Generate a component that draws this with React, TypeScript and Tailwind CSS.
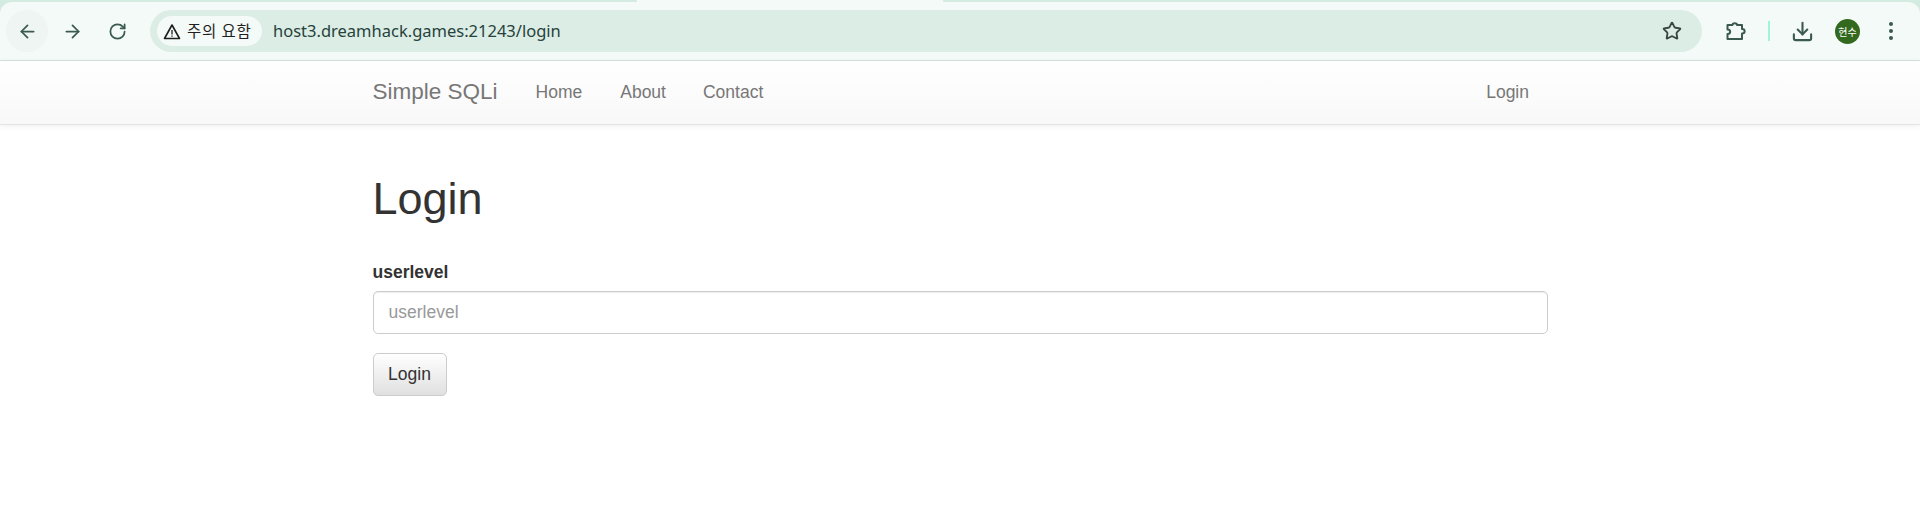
import { ArrowLeft, ArrowRight, RotateCw, Star, Download } from "lucide-react";

function ToolbarButton({ children, className }: { children: React.ReactNode; className?: string }) {
  return <div className={"flex h-[42px] w-[42px] items-center justify-center " + (className ?? "")}>{children}</div>;
}

function BrowserBar() {
  return (
    <div className="h-[61px] bg-[#d3ebe1]">
      {/* tab strip, the active tab runs into the toolbar */}
      <div className="flex h-[2px]">
        <div className="w-[637px]" />
        <div className="w-[306px] bg-[#f4faf7]" />
      </div>
      <div className="flex h-[59px] items-start rounded-t-[12px] border-b border-[#d5e3de] bg-[#f4faf7] pt-[8px] text-[#3a5a50]">
        <div className="flex w-[150px] items-center gap-[3px] pl-[6px]">
          <ToolbarButton className="rounded-full bg-[#eef5f2]">
            <ArrowLeft size={21} strokeWidth={2} />
          </ToolbarButton>
          <ToolbarButton>
            <ArrowRight size={21} strokeWidth={2} />
          </ToolbarButton>
          <ToolbarButton>
            <RotateCw size={19} strokeWidth={2.2} />
          </ToolbarButton>
        </div>
        <div className="flex h-[42px] w-[1552px] items-center rounded-full bg-[#dcede6] pl-[7px] pr-[20px]">
          <div className="flex h-[30px] w-[105px] shrink-0 items-center gap-[6px] whitespace-nowrap rounded-full bg-[#f4faf7] pl-[6px] font-['Noto_Sans_CJK_KR',sans-serif] text-[15.5px] tracking-[0.8px] text-[#1f1f1f]">
            <svg width="18" height="17" viewBox="0 0 18 17" fill="none" stroke="#1f1f1f" strokeWidth="1.6" className="shrink-0">
              <path d="M9 2 16.5 15.5H1.5Z" strokeLinejoin="round" />
              <path d="M9 7v4.5M9 12.5v1.2" strokeWidth="1.3" />
            </svg>
            <span>주의 요함</span>
          </div>
          <span className="ml-[11px] font-['Noto_Sans',sans-serif] text-[16.5px] text-[#26423a]">host3.dreamhack.games:21243/login</span>
          <Star size={20} strokeWidth={2.2} className="ml-auto text-[#38463f]" />
        </div>
        <div className="flex h-[42px] flex-1 items-center">
          <svg width="22" height="22" viewBox="0 0 22 22" fill="none" stroke="#3a5a50" strokeWidth="2" className="ml-[23px]" strokeLinejoin="round">
            <path d="M2.5 5H7.5C7.5 2.5 12 2.5 12 5H17V9C20.5 9 20.5 13.5 17 13.5V19H2.5V14C6 14 6 9.5 2.5 9.5Z" />
          </svg>
          <div className="ml-[21px] h-[20px] w-[2px] bg-[#9ff5dc]" />
          <Download size={23} strokeWidth={2.2} className="ml-[21px]" />
          <div className="ml-[21px] flex h-[25px] w-[25px] items-center justify-center rounded-full bg-[#33691e] font-['Noto_Sans_CJK_KR',sans-serif] text-[10px] text-white">현수</div>
          <div className="ml-[29px] flex flex-col gap-[3px]">
            <span className="h-[4px] w-[4px] rounded-full bg-[#3a5a50]" />
            <span className="h-[4px] w-[4px] rounded-full bg-[#3a5a50]" />
            <span className="h-[4px] w-[4px] rounded-full bg-[#3a5a50]" />
          </div>
        </div>
      </div>
    </div>
  );
}

function Navbar() {
  return (
    <nav className="h-[64px] border-b border-[#e4e4e4] bg-gradient-to-b from-white to-[#f8f8f8] shadow-[0_1px_6px_rgba(0,0,0,0.07)]">
      <div className="mx-auto flex h-[62px] w-[1175px] items-center text-[17.5px] text-[#777]">
        <span className="text-[22.5px] text-[#777]">Simple SQLi</span>
        <a className="ml-[38px]">Home</a>
        <a className="ml-[38px]">About</a>
        <a className="ml-[37px]">Contact</a>
        <a className="ml-auto mr-[18.5px]">Login</a>
      </div>
    </nav>
  );
}

export default function App() {
  return (
    <div className="h-[529px] overflow-hidden bg-white font-['Liberation_Sans',Arial,sans-serif] text-[17.5px] text-[#333]">
      <BrowserBar />
      <Navbar />
      <main className="mx-auto w-[1175px]">
        <h1 className="mt-[49px] text-[45px] font-normal leading-[50px]">Login</h1>
        <form className="mt-[36px]">
          <label className="block text-[17.5px] font-bold leading-[25px]">userlevel</label>
          <input
            placeholder="userlevel"
            className="mt-[6px] block h-[43px] w-full rounded-[5px] border border-[#ccc] px-[15px] text-[17.5px] shadow-[inset_0_1px_1px_rgba(0,0,0,0.075)] placeholder:text-[#999] outline-none"
          />
          <button
            type="button"
            className="mt-[19px] h-[43px] w-[74px] rounded-[5px] border border-[#ccc] bg-gradient-to-b from-white to-[#e0e0e0] text-[17.5px] text-[#333]"
          >
            Login
          </button>
        </form>
      </main>
    </div>
  );
}
